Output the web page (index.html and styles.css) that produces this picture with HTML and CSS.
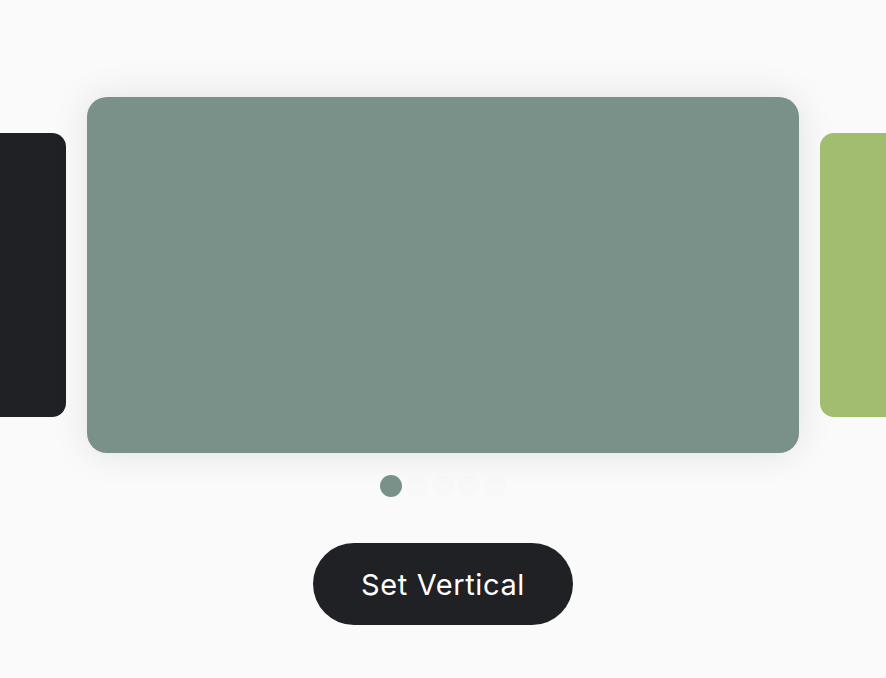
FILE: index.html
```html
<!DOCTYPE html>
<html>
<head>
<meta charset="utf-8">
<link rel="stylesheet" href="styles.css">
</head>
<body>
<div class="page">
  <div class="carousel">
    <div class="card side dark"></div>
    <div class="card main"></div>
    <div class="card side green"></div>
  </div>
  <div class="dots">
    <span class="dot active"></span>
    <span class="dot"></span>
    <span class="dot"></span>
    <span class="dot"></span>
    <span class="dot"></span>
  </div>
  <button class="btn">Set Vertical</button>
</div>
</body>
</html>
```
FILE: styles.css
```css
html, body {
  margin: 0;
  padding: 0;
  background: #fafafa;
}
.page {
  width: 886px;
  height: 678px;
  overflow: hidden;
  display: flex;
  flex-direction: column;
  align-items: center;
  padding-top: 97px;
  box-sizing: border-box;
  font-family: Inter, "Noto Sans", sans-serif;
}
.carousel {
  width: 886px;
  display: flex;
  justify-content: center;
  align-items: center;
  gap: 21px;
}
.card {
  flex-shrink: 0;
}
.main {
  width: 712px;
  height: 356px;
  border-radius: 20px;
  background: #7a918a;
  box-shadow: 0 0 36px rgba(0, 0, 0, 0.1);
}
.side {
  width: 570px;
  height: 284px;
  border-radius: 14px;
}
.dark { background: #202124; }
.green { background: #a3bd70; }
.dots {
  display: flex;
  gap: 4px;
  margin-top: 22px;
}
.dot {
  width: 22px;
  height: 22px;
  border-radius: 50%;
  background: rgba(0, 0, 0, 0.006);
}
.dot.active { background: #7a918a; }
.btn {
  margin-top: 46px;
  width: 260px;
  height: 82px;
  border: none;
  border-radius: 41px;
  background: #202124;
  color: #ffffff;
  font-family: Inter, "Noto Sans", sans-serif;
  font-size: 29px;
  font-weight: 400;
  letter-spacing: 0.6px;
  padding: 0;
}
```
